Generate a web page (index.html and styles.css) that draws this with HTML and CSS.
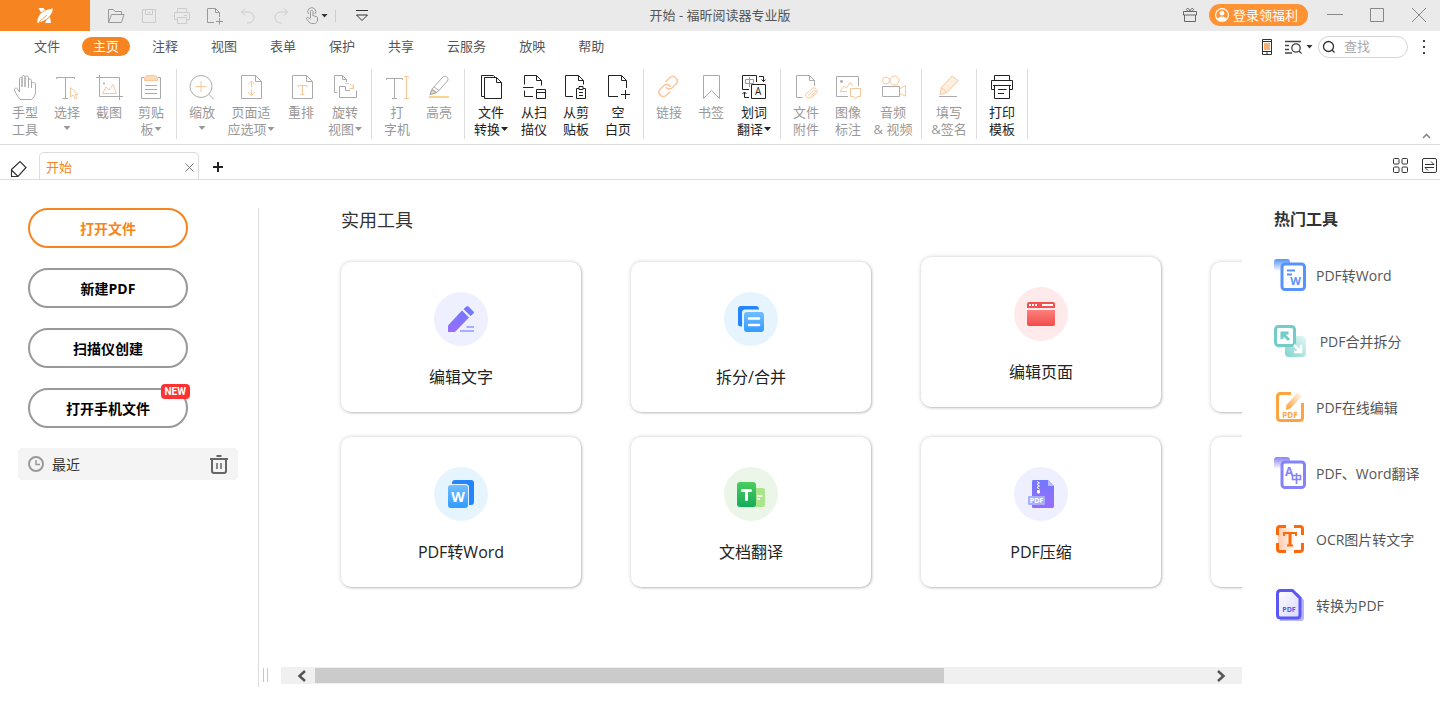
FILE: index.html
```html
<!DOCTYPE html>
<html lang="zh-CN">
<head>
<meta charset="utf-8">
<meta name="viewport" content="width=device-width, initial-scale=1">
<title>开始 - 福昕阅读器专业版</title>
<link rel="stylesheet" href="styles.css">
</head>
<body>
<header class="titlebar">
  <div class="quick">
    <button class="logo" aria-label="福昕">
      <svg width="18" height="18" viewBox="0 0 18 18" fill="#fff"><path d="M1 16C1.500 8 6 3 17 1.500C15.500 9 11 13.500 1 16Z"/><path d="M2.500 1H7.500L9 3L5 5.500ZM10.500 13L14 10L15 16H9Z"/><path d="M3 15L11 8" stroke="#f68521" stroke-width=".8"/></svg>
    </button>
    <div class="quick-tools">
      <button class="qbtn" aria-label="打开"><svg width="18" height="18" viewBox="0 0 18 18"><path d="M1.500 15.500V2.500H6.500L8 4.500H14.500V7M1.500 15.500L4.500 7.500H17L14.500 15.500Z"/></svg></button>
      <button class="qbtn off" aria-label="保存"><svg width="18" height="18" viewBox="0 0 18 18"><path d="M2.500 2.500H15.500V15.500H2.500ZM5.500 2.500V7.500H12.500V2.500M8 5.500H10"/></svg></button>
      <button class="qbtn off" aria-label="打印"><svg width="18" height="18" viewBox="0 0 18 18"><path d="M4.500 5.500V1.500H13.500V5.500M4.500 12.500H1.500V5.500H16.500V12.500H13.500M4.500 10.500H13.500V16.500H4.500ZM11 8.500H14"/></svg></button>
      <button class="qbtn" aria-label="新建"><svg width="18" height="18" viewBox="0 0 18 18"><path d="M8 15.500H1.500V1.500H9.500L13.500 5.500V10M9.500 1.500V5.500H13.500M13.500 11V17.500M10 14.500H17"/></svg></button>
      <button class="qbtn off" aria-label="撤销"><svg width="18" height="18" viewBox="0 0 18 18"><path d="M6 1.500L2.500 5L6 8.500M2.500 5H9.500A5.500 5.500 0 0 1 9.500 16H8"/></svg></button>
      <button class="qbtn off" aria-label="重做"><svg width="18" height="18" viewBox="0 0 18 18"><path d="M12 1.500L15.500 5L12 8.500M15.500 5H8.500A5.500 5.500 0 0 0 8.500 16H10"/></svg></button>
      <button class="qbtn touch" aria-label="触摸模式"><svg width="16" height="18" viewBox="0 0 16 18"><path d="M6.500 11V4.500C6.500 3 9 3 9 4.500V9C10 8.500 11 9 11 9.500C12.500 9 13.500 10 13.500 11V13C13.500 15 12 16.500 10.500 16.500H7.500C6 16.500 4 14 2.500 12C2 10.500 4 10 5 11L6.500 12.500M4.500 7A4 4 0 1 1 11 7"/></svg><i class="caret dark"></i></button>
      <span class="qsep"></span>
      <button class="qbtn dark" aria-label="自定义"><svg width="14" height="16" viewBox="0 0 14 16"><path d="M1 2.500H13"/><path d="M1.500 7H12.500L7 12.500Z" stroke-width="1"/></svg></button>
    </div>
  </div>
  <h1 class="title">开始 - 福昕阅读器专业版</h1>
  <div class="window-tools">
    <button class="gift" aria-label="礼物"><svg width="16" height="16" viewBox="0 0 16 16"><path d="M1.500 4.500H14.500V8H1.500ZM2.500 8V14.500H13.500V8M8 4.500C4 4.500 4 1.500 5.500 1.500S8 3 8 4.500C8 3 9 1.500 10.500 1.500S12 4.500 8 4.500"/></svg></button>
    <button class="login"><svg width="14" height="14" viewBox="0 0 14 14"><circle cx="7" cy="7" r="6.400" fill="none" stroke="#fff" stroke-width="1.200"/><circle cx="7" cy="5.200" r="2.400" fill="#fff"/><path d="M2.500 11C3.500 7.500 10.500 7.500 11.500 11L9.500 12.700H4.500Z" fill="#fff"/></svg>登录领福利</button>
    <button class="win" aria-label="最小化"><svg width="16" height="16" viewBox="0 0 16 16"><path d="M0 7.500H16"/></svg></button>
    <button class="win" aria-label="最大化"><svg width="16" height="16" viewBox="0 0 16 16"><path d="M1.500 1.500H14.500V14.500H1.500Z"/></svg></button>
    <button class="win" aria-label="关闭"><svg width="16" height="16" viewBox="0 0 16 16"><path d="M1 1L15 15M15 1L1 15"/></svg></button>
  </div>
</header>

<div class="menubar">
  <nav class="menu">
    <a href="#">文件</a><a href="#" class="active">主页</a><a href="#">注释</a><a href="#">视图</a><a href="#">表单</a><a href="#">保护</a><a href="#">共享</a><a href="#">云服务</a><a href="#">放映</a><a href="#">帮助</a>
  </nav>
  <div class="menu-tools">
    <button aria-label="手机"><svg width="12" height="18" viewBox="0 0 12 18" fill="none" stroke="#333"><path d="M1.500 1.500H10.500V16.500H1.500ZM1.500 3.500H10.500M1.500 13.500H10.500M5 15H7"/><path d="M3 5H9V12H3Z" fill="#fbb070" stroke="none"/></svg></button>
    <button class="advanced" aria-label="高级搜索"><svg width="17" height="16" viewBox="0 0 17 16" fill="none" stroke="#444" stroke-width="1.300"><path d="M0 2.500H16M0 6.500H4M0 10.500H4M0 14H7"/><circle cx="11" cy="9" r="4.200"/><path d="M14 12L16.500 14.500"/></svg><i class="caret dark"></i></button>
    <label class="search"><svg width="14" height="14" viewBox="0 0 14 14" fill="none" stroke="#333" stroke-width="1.300"><circle cx="6.500" cy="6.500" r="5"/><path d="M10 10L12.500 12.500"/></svg><input type="text" placeholder="查找" aria-label="查找"></label>
    <button aria-label="更多"><svg width="4" height="16" viewBox="0 0 4 16" fill="#444"><path d="M1 1h2v2H1zM1 7h2v2H1zM1 13h2v2H1z"/></svg></button>
  </div>
</div>

<div class="ribbon">
  <div class="group">
    <button class="tool"><svg viewBox="0 0 28 28"><path d="M9 25.500C7 23 4.500 19 3.500 16C3 14 5.500 13.500 6.500 15L8.500 18V5C8.500 3 11 3 11 5V13V3C11 1 14 1 14 3V13V3.500C14 1.500 17.500 1.500 17.500 3.500V14V6.500C17.500 4.500 20.500 4.500 20.500 6.500V14V10C20.500 8 24.500 8 24.500 10V18C24.500 22 22 24 20.500 25.500Z"/></svg><span>手型<br>工具</span></button>
    <button class="tool"><svg viewBox="0 0 28 28"><path d="M3.500 5V3.500H21.500V5M12.500 3.500V24.500M10 24.500H15"/><path class="o" d="M17.500 13.500V23L20 21L22 25L24 24L22 20.500H25Z"/></svg><span>选择</span><i class="caret"></i></button>
    <button class="tool"><svg viewBox="0 0 28 28"><path d="M1 3.500H24.500V26M4.500 1V22.500H28"/><path class="o" d="M7.500 19.500L11 13L14 16L18 10.500L21.500 19.500Z"/><circle cx="9" cy="9.500" r="1" fill="#aaa" stroke="none"/></svg><span>截图</span></button>
    <button class="tool"><svg viewBox="0 0 28 28"><path d="M7 3.500H4.500V24.500H23.500V3.500H21M8 11.500H20M8 15.500H20M8 19.500H20"/><path class="o fill" d="M7.500 6.500V3.500L10 1.500H18L20.500 3.500V6.500Z"/></svg><span>剪贴<br>板<i class="caret"></i></span></button>
  </div>
  <div class="group">
    <button class="tool"><svg viewBox="0 0 28 28"><circle cx="13" cy="12.500" r="11"/><path d="M21 20.500L26 25.500"/><path class="o" d="M7.500 12.500H18.500M13 7V18"/></svg><span>缩放</span><i class="caret"></i></button>
    <button class="tool w56"><svg viewBox="0 0 28 28"><path d="M4.500 1.500H18.500L24.500 7.500V24.500H4.500ZM18.500 1.500V7.500H24.500"/><path class="o" d="M14.500 7V13M14.500 15.500V21.500M11 10.500L14.500 7L18 10.500M11 18L14.500 21.500L18 18"/></svg><span>页面适<br>应选项<i class="caret"></i></span></button>
    <button class="tool w44"><svg viewBox="0 0 28 28"><path d="M5.500 1.500H19.500L25.500 7.500V24.500H5.500ZM19.500 1.500V7.500H25.500"/><path class="o" d="M11 13.500V11.500H20V13.500M15.500 11.500V20.500M13.500 20.500H17.500"/></svg><span>重排</span></button>
    <button class="tool w44"><svg viewBox="0 0 28 28"><path d="M6 18.500H3.500V1.500H11.500L15.500 5.500V8M11.500 1.500V5.500H15.500M25.500 16.500V23.500H8.500V12.500H14.500V16.500H19"/><path class="o" d="M14 9.500C19 9 21.500 11 22.500 15M18.500 14.500H22.500V10"/></svg><span>旋转<br>视图<i class="caret"></i></span></button>
  </div>
  <div class="group">
    <button class="tool"><svg viewBox="0 0 28 28"><path d="M3.500 6V4.500H19.500V6M11.500 4.500V24.500M9 24.500H14"/><path class="o" d="M21 2.500H26M23.500 2.500V24.500M21 24.500H26"/></svg><span>打<br>字机</span></button>
    <button class="tool"><svg viewBox="0 0 28 28"><path d="M7 15L18 3C20 .5 24.500 4 22.500 7L12 18.500ZM7 15L5 20.500L12 18.500M9 13L14 16.500"/><path d="M7 16L11.500 18.500L5 20.500Z" fill="#fbd9a5"/><path d="M4 23H24" stroke="#fbd38f" stroke-width="2"/></svg><span>高亮</span></button>
  </div>
  <div class="group on">
    <button class="tool w44"><svg viewBox="0 0 28 28"><path d="M7 22.500H4.500V1.500H16.500L19 4M7.500 3.500H19.500L24.500 8.500V24.500H7.500ZM19.500 3.500V8.500H24.500"/></svg><span>文件<br>转换<i class="caret"></i></span></button>
    <button class="tool"><svg viewBox="0 0 28 28"><path d="M4.500 10.500V1.500H16.500L21.500 6.500V11.500M16.500 1.500V6.500H21.500M3 13.500H13.500M4.500 16.500V22.500H13M16.500 15.500H25.500V24.500H16.500ZM16.500 18.500H25.500"/></svg><span>从扫<br>描仪</span></button>
    <button class="tool"><svg viewBox="0 0 28 28"><path d="M11 22.500H3.500V1.500H16.500L21.500 6.500V10.500M16.500 1.500V6.500H21.500M17 14.500H14.500V24.500H23.500V14.500H21M17 12.500H21V15.500H17ZM17 18.500H21M17 21.500H21"/></svg><span>从剪<br>贴板</span></button>
    <button class="tool"><svg viewBox="0 0 28 28"><path d="M14 22.500H4.500V1.500H17.500L22.500 6.500V14M17.500 1.500V6.500H22.500M21.500 16V25M17 20.500H26"/></svg><span>空<br>白页</span></button>
  </div>
  <div class="group">
    <button class="tool"><svg viewBox="0 0 28 28"><path class="o" stroke-width="1.500" d="M10.500 8L15 3.500C18.500 0 24.500 5.500 21.500 9.500L17 14C14.500 16 11.500 14.500 11 13M15.500 17.500L11 21.500C7 24.500 1.500 19.500 5 15.500L9.500 11C12 9.500 15 11 15.500 13"/></svg><span>链接</span></button>
    <button class="tool"><svg viewBox="0 0 28 28"><path d="M6.500 1.500H22.500V24.500L14.500 16.500L6.500 24.500Z"/></svg><span>书签</span></button>
    <button class="tool w44 live"><svg viewBox="0 0 28 28"><path d="M9 15.500H2.500V1.500H16.500V8M11.500 10.500H25.500V24.500H11.500ZM19 2.500H23.500V7.500M21.500 5.500L23.500 7.500L25.500 5.500M9 23.500H4.500V18M2.500 20L4.500 18L6.500 20"/><path d="M5.500 5.500H13.500V9.500H5.500ZM9.500 3V13" stroke="#f68521"/><text x="15" y="21" class="ti" font-size="10" fill="#222">A</text></svg><span>划词<br>翻译<i class="caret"></i></span></button>
  </div>
  <div class="group">
    <button class="tool"><svg viewBox="0 0 28 28"><path d="M10.500 23.500H4.500V1.500H17.500L22.500 6.500V12M17.500 1.500V6.500H22.500"/><path class="o" d="M14 20L20 14.500C22.500 12.500 27 15.500 24.500 19L20 23C17 25.500 12 23 14 20M16 21.500L21.500 16.500C23 15.500 24.500 17 23 18.500L18.500 22.500"/></svg><span>文件<br>附件</span></button>
    <button class="tool"><svg viewBox="0 0 28 28"><path d="M14 22.500H2.500V2.500H24.500V12"/><circle cx="7.500" cy="7.500" r="1.400" fill="#aaa" stroke="none"/><path class="o" d="M6 17.500L10 12L12.500 14L16 8.500L19 12M6 17.500H13M16.500 14.500H26.500V22.500H23L21.500 25L20 22.500H16.500Z"/></svg><span>图像<br>标注</span></button>
    <button class="tool w48"><svg viewBox="0 0 28 28"><path d="M3.500 12.500H20.500V22.500H3.500Z"/><path class="o" d="M20.500 15L26.500 11.500V22L20.500 19.500"/><circle class="o" cx="7" cy="6.500" r="3.500"/><circle class="o" cx="15.500" cy="6.500" r="4.500"/></svg><span>音频<br>&amp; 视频</span></button>
  </div>
  <div class="group">
    <button class="tool w46"><svg viewBox="0 0 28 28"><path class="o" d="M5 20.500L6.500 13.500L17 2L23 6.500L12 18.500ZM6.500 13.500L12 18.500" fill="#fff0e2"/><path d="M4 22.500H22"/></svg><span>填写<br>&amp;签名</span></button>
  </div>
  <div class="group on">
    <button class="tool"><svg viewBox="0 0 28 28"><path d="M6.500 6V1.500H21.500V6M6 15.500H3.500V6.500H24.500V15.500H22M6.500 11.500H21.500V24.500H6.500ZM5 11.500H23M10 15.500H18.500M10 19.500H16"/></svg><span>打印<br>模板</span></button>
  </div>
  <button class="collapse" aria-label="折叠"><svg width="9" height="6" viewBox="0 0 9 6" fill="none" stroke="#888" stroke-width="1.600"><path d="M1 5L4.500 1.500L8 5"/></svg></button>
</div>

<div class="tabs">
  <button class="eraser" aria-label="橡皮擦"><svg width="17" height="18" viewBox="0 0 17 18" fill="none" stroke="#333" stroke-width="1.200"><path d="M1.500 9.500L10 1.500L16 7.500L8 16.500H1.500ZM1.500 10L7.500 16"/></svg></button>
  <div class="tab"><a href="#">开始</a><button aria-label="关闭标签"><svg width="9" height="9" viewBox="0 0 9 9" fill="none" stroke="#777"><path d="M.5 .5L8.500 8.500M8.500 .5L.5 8.500"/></svg></button></div>
  <button class="add" aria-label="新标签"><svg width="10" height="10" viewBox="0 0 10 10" stroke="#222" stroke-width="2"><path d="M5 0V10M0 5H10"/></svg></button>
  <div class="tab-tools">
    <button aria-label="网格"><svg width="16" height="16" viewBox="0 0 16 16" fill="none" stroke="#333"><rect x=".5" y=".5" width="5.500" height="5.500" rx="1"/><rect x="9" y=".5" width="5.500" height="5.500" rx="1"/><rect x=".5" y="9" width="5.500" height="5.500" rx="1"/><rect x="9" y="9" width="5.500" height="5.500" rx="1"/></svg></button>
    <button aria-label="切换"><svg width="16" height="16" viewBox="0 0 16 16" fill="none" stroke="#333"><rect x=".5" y=".5" width="14" height="14" rx="1.500"/><path d="M3 6.500H12L9 3.500M12 9.500H3L6 12.500"/></svg></button>
  </div>
</div>

<main class="main">
  <aside class="side">
    <button class="pill primary">打开文件</button>
    <button class="pill">新建PDF</button>
    <button class="pill">扫描仪创建</button>
    <button class="pill">打开手机文件<span class="badge">NEW</span></button>
    <div class="recent">
      <svg width="16" height="16" viewBox="0 0 16 16" fill="none" stroke="#999" stroke-width="2"><circle cx="8" cy="8" r="7"/><path d="M8 4V8.500H12" stroke-width="1.500"/></svg>
      <span>最近</span>
      <button aria-label="清空"><svg width="18" height="20" viewBox="0 0 18 20" fill="none" stroke="#666" stroke-width="2"><path d="M0 5H18M6.500 2H11.500M2 5V17Q2 19 4 19H14Q16 19 16 17V5"/><path d="M7 9V15M11 9V15" stroke-width="1.500"/></svg></button>
    </div>
  </aside>
  <div class="splitter"><i></i></div>
  <section class="center">
    <h2>实用工具</h2>
    <div class="cards">
      <button class="card"><svg viewBox="0 0 54 54"><defs><linearGradient id="gp" x1="0" y1="0" x2="0" y2="1"><stop stop-color="#7378ff"/><stop offset="1" stop-color="#996dfb"/></linearGradient><linearGradient id="gb" x1="0" y1="0" x2="0" y2="1"><stop stop-color="#72bdff"/><stop offset="1" stop-color="#319bff"/></linearGradient></defs><circle cx="27" cy="27" r="27" fill="#eff0ff"/><path d="M28 18.500L35 25.500L21.500 39.500Q21 40 20 40H14V33.500Z" fill="url(#gp)"/><path d="M29.500 17L32.500 14.500Q33.500 13.500 34.500 14.500L39.500 19.500Q40.500 20.500 39.500 21.500L36.500 24Z" fill="#7478ff"/><path d="M32.500 34H40V36H32.500ZM26 38H40V40H26Z" fill="#a7adff"/></svg>编辑文字</button>
      <button class="card"><svg viewBox="0 0 54 54"><circle cx="27" cy="27" r="27" fill="#e6f5fd"/><path d="M17 34.500Q14 34.500 14 32V17Q14 14 17 14H32Q35 14 35 17.500H21Q18 17.500 18 21V34.500Z" fill="#2485ff"/><rect x="20" y="20" width="20" height="20" rx="3" fill="url(#gb)"/><path d="M25 26.500H35M25 33H35" stroke="#fff" stroke-width="2.500" stroke-linecap="round"/></svg>拆分/合并</button>
      <button class="card raised"><svg viewBox="0 0 54 54"><defs><linearGradient id="gr" x1="0" y1="0" x2="0" y2="1"><stop stop-color="#fb817d"/><stop offset="1" stop-color="#f34c49"/></linearGradient></defs><circle cx="27" cy="27" r="27" fill="#feeaea"/><path d="M13 21V17Q13 15 15 15H39Q41 15 41 17V21Z" fill="#f35050"/><path d="M13 23H41V37Q41 39 39 39H15Q13 39 13 37Z" fill="url(#gr)"/><path d="M15 17h2v2h-2zM18 17h2v2h-2zM21 17h2v2h-2zM28 17h11v2h-11z" fill="#fff"/></svg>编辑页面</button>
      <div class="card"></div>
      <button class="card"><svg viewBox="0 0 54 54"><circle cx="27" cy="27" r="27" fill="#e6f5fd"/><rect x="18" y="13" width="22" height="25" rx="3" fill="#2485ff"/><rect x="13" y="17" width="22" height="25" rx="3.500" fill="#e6f5fd"/><rect x="14" y="18" width="20" height="23" rx="3" fill="url(#gb)"/><text x="24" y="34.500" text-anchor="middle" class="ti" font-weight="700" font-size="14" fill="#fff">W</text></svg>PDF转Word</button>
      <button class="card"><svg viewBox="0 0 54 54"><defs><linearGradient id="gg" x1="0" y1="0" x2="0" y2="1"><stop stop-color="#4ccd5e"/><stop offset="1" stop-color="#15ab5b"/></linearGradient></defs><circle cx="27" cy="27" r="27" fill="#ebf6e8"/><rect x="26" y="21" width="15" height="19" rx="2.500" fill="#aae58c"/><rect x="13" y="15" width="19" height="25" rx="3" fill="url(#gg)"/><path d="M18.500 23.500H26.500M22.500 23.500V32.500" stroke="#fff" stroke-width="3" stroke-linecap="round"/><path d="M33 29H38.500M33 32H36" stroke="#fff" stroke-width="1.300"/></svg>文档翻译</button>
      <button class="card"><svg viewBox="0 0 54 54"><circle cx="27" cy="27" r="27" fill="#eff0ff"/><path d="M18 15Q18 13 19 13H34L40 19V39Q40 41 39 41H19Q18 41 18 40Z" fill="url(#gp)"/><path d="M34 13L40 19H34Z" fill="#b9bdff"/><path d="M23 14.500L25.500 16L23 17.500L25.500 19L23 20.500L25.500 22" stroke="#fff" fill="none"/><rect x="23" y="23" width="3" height="3.500" rx="1" fill="#fff"/><rect x="14" y="29" width="17" height="9" rx="1" fill="#a7adff"/><text x="22.500" y="36" text-anchor="middle" class="ti" font-weight="700" font-size="7" fill="#fff">PDF</text></svg>PDF压缩</button>
      <div class="card"></div>
    </div>
    <div class="scroll">
      <button aria-label="向左"><svg width="10" height="12" viewBox="0 0 10 12" fill="none" stroke="#555" stroke-width="2.500"><path d="M8 1L2.500 6L8 11"/></svg></button>
      <div class="track"><div class="thumb"></div></div>
      <button aria-label="向右"><svg width="10" height="12" viewBox="0 0 10 12" fill="none" stroke="#555" stroke-width="2.500"><path d="M2 1L7.500 6L2 11"/></svg></button>
    </div>
  </section>
  <aside class="hot">
    <h2>热门工具</h2>
    <a href="#"><svg viewBox="0 0 32 32"><defs><linearGradient id="h1" x1="0" y1="0" x2="0" y2="1"><stop stop-color="#4f92fa"/><stop offset="1" stop-color="#fff"/></linearGradient></defs><path d="M0 12V3Q0 0 3 0H13Q16 0 16 3V12Z" fill="url(#h1)"/><rect x="8" y="5" width="22.500" height="25.500" rx="3" fill="#fff" stroke="#5793fb" stroke-width="3"/><path d="M13 11.500H21M13 15.500H18" stroke="#5793fb" stroke-width="2"/><text x="21.500" y="25.500" text-anchor="middle" class="ti" font-weight="700" font-size="11" fill="#5793fb">W</text></svg>PDF转Word</a>
    <a href="#"><svg viewBox="0 0 32 32"><defs><linearGradient id="h2" x1="1" y1="0" x2="0" y2="1"><stop stop-color="#e8f8f6"/><stop offset="1" stop-color="#7dd3cd"/></linearGradient></defs><rect x="11" y="11" width="21" height="21" rx="4" fill="url(#h2)"/><rect x="1.500" y="1.500" width="19" height="19" rx="3" fill="#fff" stroke="#72cdc7" stroke-width="3"/><path d="M15 15L8.500 8.500M8 14V8H14.500" fill="none" stroke="#72cdc7" stroke-width="3"/><path d="M20 20L26.500 26.500M27 20V27H20" fill="none" stroke="#fff" stroke-width="2.500"/></svg>&nbsp;PDF合并拆分</a>
    <a href="#"><svg viewBox="0 0 32 32"><defs><linearGradient id="h3" x1="1" y1="0" x2="0" y2="1"><stop stop-color="#fff"/><stop offset="1" stop-color="#fc9b2d"/></linearGradient></defs><path d="M17 2.500H6.500Q3.500 2.500 3.500 5.500V26.500Q3.500 29.500 6.500 29.500H25.500Q28.500 29.500 28.500 26.500V12" fill="none" stroke="#fca440" stroke-width="3"/><path d="M12 19L12.500 14L24 1L28 5L17 17Z" fill="url(#h3)"/><text x="16" y="26.500" text-anchor="middle" class="ti" font-weight="700" font-size="8" fill="#fca440">PDF</text></svg>PDF在线编辑</a>
    <a href="#"><svg viewBox="0 0 32 32"><defs><linearGradient id="h4" x1="0" y1="0" x2="0" y2="1"><stop stop-color="#8783f8"/><stop offset="1" stop-color="#fff"/></linearGradient></defs><path d="M0 12V3Q0 0 3 0H13Q16 0 16 3V12Z" fill="url(#h4)"/><rect x="8" y="5" width="22.500" height="25.500" rx="3" fill="#fff" stroke="#8583fb" stroke-width="3"/><text x="11" y="18.500" class="ti" font-weight="700" font-size="12" fill="#8583fb">A</text><path d="M18.500 18.500H26.500V22.500H18.500ZM22.500 16V27" fill="none" stroke="#8583fb" stroke-width="1.600"/></svg>PDF、Word翻译</a>
    <a href="#"><svg viewBox="0 0 32 32"><defs><linearGradient id="h5" x1="0" y1="0" x2="1" y2="0"><stop stop-color="#ffc9a8"/><stop offset="1" stop-color="#fff"/></linearGradient></defs><rect x="4" y="5" width="18" height="23" fill="url(#h5)"/><path d="M12 3.500H6Q3.500 3.500 3.500 6V12M20 3.500H26Q28.500 3.500 28.500 6V12M12 28.500H6Q3.500 28.500 3.500 26V20M20 28.500H26Q28.500 28.500 28.500 26V20" fill="none" stroke="#fc690a" stroke-width="3"/><path d="M10 13V10H22V13M13 22.500H19" fill="none" stroke="#fc690a" stroke-width="2"/><path d="M16 10V22" stroke="#fc690a" stroke-width="3"/></svg>OCR图片转文字</a>
    <a href="#"><svg viewBox="0 0 32 32"><defs><linearGradient id="h6" x1="0" y1="0" x2="1" y2="1"><stop stop-color="#fff"/><stop offset="1" stop-color="#d7d6fd"/></linearGradient></defs><path d="M6 4H24L30 11V29Q30 32 27 32H6Z" fill="#b9b8fc"/><path d="M3.500 4.500Q3.500 1.500 6.500 1.500H18.500L26 9V26Q26 29 23 29H6.500Q3.500 29 3.500 26Z" fill="url(#h6)" stroke="#5b56f5" stroke-width="3" stroke-linejoin="round"/><text x="15" y="23" text-anchor="middle" class="ti" font-weight="700" font-size="7" fill="#5b56f5">PDF</text></svg>转换为PDF</a>
  </aside>
</main>
</body>
</html>
```
FILE: styles.css
```css
* { box-sizing: border-box; }
body {
  margin: 0;
  min-height: 100vh;
  display: flex;
  flex-direction: column;
  background: #fff;
  color: #555;
  font: 13px/17px "Open Sans", "Noto Sans CJK SC", sans-serif;
  overflow-x: hidden;
}
button {
  border: 0;
  padding: 0;
  background: none;
  color: inherit;
  font: inherit;
  display: flex;
  align-items: center;
  justify-content: center;
}
a { color: inherit; text-decoration: none; }
h1, h2 { margin: 0; font-weight: 400; }
svg { display: block; flex: none; }
.ti { font-family: "Open Sans", sans-serif; stroke: none; }

.caret {
  display: inline-block;
  width: 7px;
  height: 4px;
  margin-left: 1px;
  background: #999;
  clip-path: polygon(0 0, 100% 0, 50% 100%);
  vertical-align: 3px;
}
.caret.dark { background: #333; }

/* title bar */
.titlebar {
  display: grid;
  grid-template-columns: 1fr auto 1fr;
  align-items: center;
  height: 31px;
  background: #eaeaea;
}
.quick, .quick-tools, .window-tools { display: flex; align-items: center; }
.logo { width: 90px; height: 31px; background: #f68521; }
.quick-tools { padding-left: 9px; }
.qbtn { width: 33px; height: 30px; }
.qbtn svg { fill: none; stroke: #999; }
.qbtn.off svg { stroke: #ccc; }
.qbtn.dark svg { stroke: #333; stroke-width: 1; }
.qbtn.touch { width: 38px; }
.qsep { width: 1px; height: 12px; margin-right: 9px; background: #ccc; }
.title { padding-bottom: 1px; font-size: 13px; line-height: 17px; }
.window-tools { justify-content: flex-end; padding: 0 13px 1px 0; }
.gift svg { fill: none; stroke: #666; }
.login {
  gap: 4px;
  height: 22px;
  margin: 0 19px 0 11px;
  padding: 0 10px 0 6px;
  border-radius: 11px;
  background: #ff9233;
  color: #fff;
}
.win + .win { margin-left: 26px; }
.win svg { fill: none; stroke: #888; }

/* menu */
.menubar {
  display: flex;
  justify-content: space-between;
  align-items: center;
  height: 31px;
  padding: 0 14px 0 23px;
}
.menu { display: flex; gap: 11px; }
.menu a { padding: 0 11px 1px; line-height: 18px; border-radius: 10px; }
.menu .active { background: #f68521; color: #fff; }
.menu-tools { display: flex; align-items: center; gap: 14px; }
.advanced { gap: 3px; margin: 0 -9px 0 -2px; }
.search {
  display: flex;
  align-items: center;
  gap: 8px;
  width: 90px;
  height: 22px;
  padding: 0 3px;
  border: 1px solid #d6d6d6;
  border-radius: 11px;
}
.search input {
  min-width: 0;
  width: 100%;
  border: 0;
  padding: 0;
  outline: 0;
  background: none;
  font: inherit;
}
.search input::placeholder { color: #aaa; }

/* ribbon */
.ribbon {
  display: flex;
  height: 83px;
  padding: 7px 9px 5px 0;
  border-bottom: 1px solid #dcdcdc;
}
.group { display: flex; padding: 0 4px; border-right: 1px solid #dcdcdc; color: #999; }
.tool {
  width: 42px;
  flex-direction: column;
  justify-content: flex-start;
  padding-top: 5px;
  white-space: nowrap;
}
.w44 { width: 44px; }
.w46 { width: 46px; }
.w48 { width: 48px; }
.w56 { width: 56px; }
.tool svg { width: 28px; height: 28px; margin-bottom: 2px; fill: none; stroke: #aaa; }
.tool .o { stroke: #f9c79b; }
.tool .fill { fill: #fdd9b5; }
.tool > .caret { margin: 5px 0 0; }
.on, .live { color: #222; }
.on svg, .live svg { stroke: #222; }
.on .caret, .live .caret { background: #222; }
.collapse { margin: auto 0 0 auto; }

/* tabs */
.tabs {
  display: flex;
  align-items: flex-end;
  height: 35px;
  padding: 0 2px 0 10px;
  border-bottom: 1px solid #dcdcdc;
}
.eraser { margin-right: 12px; padding-bottom: 1px; }
.tab {
  display: flex;
  align-items: center;
  justify-content: space-between;
  width: 160px;
  height: 27px;
  padding: 2px 4px 0 6px;
  border: 1px solid #dcdcdc;
  border-bottom: 0;
  border-radius: 5px 5px 0 0;
  color: #f68521;
}
.add { margin-left: 14px; padding-bottom: 7px; }
.tab-tools { display: flex; gap: 13px; margin-left: auto; padding-bottom: 5px; }

/* content */
.main {
  flex: 1;
  display: grid;
  grid-template-columns: 259px 22px minmax(0, 1fr) 198px;
  padding: 28px 0 32px;
}
.side {
  display: flex;
  flex-direction: column;
  gap: 20px;
  padding: 0 20px 0 18px;
  border-right: 1px solid #dcdcdc;
}
.pill {
  position: relative;
  width: 160px;
  height: 40px;
  margin-left: 10px;
  border: 2px solid #999;
  border-radius: 20px;
  color: #000;
  font-size: 14px;
  font-weight: 700;
}
.primary { border-color: #f68521; color: #f68521; }
.badge {
  position: absolute;
  top: -6px;
  right: -4px;
  padding: 0 4px;
  border-radius: 4px;
  background: #ff3232;
  color: #fff;
  font: 700 10px/15px Roboto, sans-serif;
}
.recent {
  display: flex;
  align-items: center;
  gap: 8px;
  height: 32px;
  padding: 0 10px;
  border-radius: 4px;
  background: #f4f4f4;
  color: #333;
  font-size: 14px;
}
.recent button { margin-left: auto; }
.splitter { display: flex; align-items: flex-end; padding: 0 0 5px 4px; }
.splitter i { width: 5px; height: 14px; border: 1px solid #c8c8c8; border-width: 0 1px; }
.center { display: flex; flex-direction: column; padding-bottom: 3px; overflow: hidden; }
.center h2 { padding-left: 60px; font-size: 18px; line-height: 25px; color: #333; }
.cards {
  display: grid;
  grid-template-columns: repeat(4, 240px);
  gap: 25px 50px;
  padding: 29px 0 24px 60px;
}
.card {
  height: 150px;
  padding-top: 30px;
  flex-direction: column;
  justify-content: flex-start;
  gap: 20px;
  border-radius: 10px;
  background: #fff;
  box-shadow: 0 0 4px rgba(0, 0, 0, .2), 1px 1px 2px rgba(0, 0, 0, .16);
  color: #222;
  font-size: 16px;
  line-height: 22px;
}
.card svg { width: 54px; height: 54px; }
.raised { transform: translateY(-5px); }
.scroll {
  display: flex;
  align-items: stretch;
  height: 17px;
  margin-top: auto;
  padding: 0 16px;
  background: #f0f0f0;
}
.track { flex: 1; margin: 0 8px; padding: 1px 0; }
.thumb { width: 70.4%; height: 15px; background: #cbcbcb; }

.hot { padding-left: 32px; font-size: 14px; color: #555; white-space: nowrap; }
.hot h2 { margin-bottom: 28px; font-size: 16px; font-weight: 700; line-height: 23px; color: #333; }
.hot a { display: flex; align-items: center; gap: 10px; height: 32px; margin-bottom: 34px; }
.hot svg { width: 32px; height: 32px; }
```
